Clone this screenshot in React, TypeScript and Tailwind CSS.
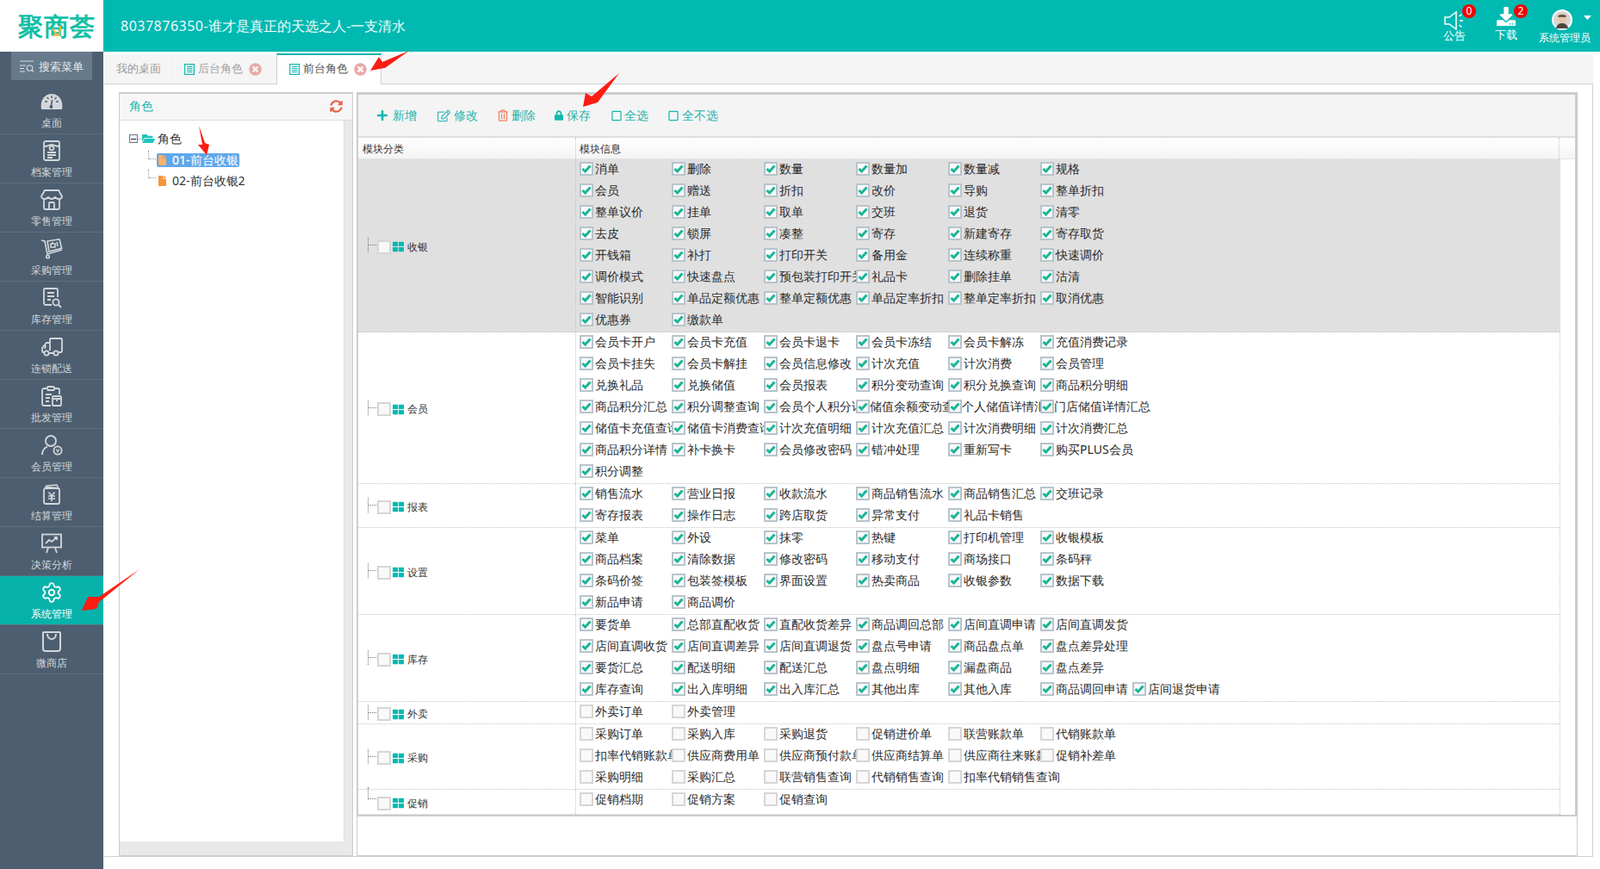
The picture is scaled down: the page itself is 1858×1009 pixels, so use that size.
import React from "react";
import { Settings } from "lucide-react";
import { FaPlus, FaRegEdit, FaRegTrashAlt, FaLock, FaSyncAlt, FaFolderOpen, FaFile, FaTimesCircle, FaThLarge, FaDownload, FaRegSquare } from "react-icons/fa";

type Group = { name: string; lines: string[][]; checked: boolean; shaded?: boolean; last?: boolean };

const groups: Group[] = [
  { name: "收银", checked: true, shaded: true, lines: [
    ["消单","删除","数量","数量加","数量减","规格"],
    ["会员","赠送","折扣","改价","导购","整单折扣"],
    ["整单议价","挂单","取单","交班","退货","清零"],
    ["去皮","锁屏","凑整","寄存","新建寄存","寄存取货"],
    ["开钱箱","补打","打印开关","备用金","连续称重","快速调价"],
    ["调价模式","快速盘点","预包装打印开关","礼品卡","删除挂单","沽清"],
    ["智能识别","单品定额优惠","整单定额优惠","单品定率折扣","整单定率折扣","取消优惠"],
    ["优惠券","缴款单"],
  ]},
  { name: "会员", checked: true, lines: [
    ["会员卡开户","会员卡充值","会员卡退卡","会员卡冻结","会员卡解冻","充值消费记录"],
    ["会员卡挂失","会员卡解挂","会员信息修改","计次充值","计次消费","会员管理"],
    ["兑换礼品","兑换储值","会员报表","积分变动查询","积分兑换查询","商品积分明细"],
    ["商品积分汇总","积分调整查询","会员个人积分详情","储值余额变动查询","个人储值详情汇总","门店储值详情汇总"],
    ["储值卡充值查询","储值卡消费查询","计次充值明细","计次充值汇总","计次消费明细","计次消费汇总"],
    ["商品积分详情","补卡换卡","会员修改密码","错冲处理","重新写卡","购买PLUS会员"],
    ["积分调整"],
  ]},
  { name: "报表", checked: true, lines: [
    ["销售流水","营业日报","收款流水","商品销售流水","商品销售汇总","交班记录"],
    ["寄存报表","操作日志","跨店取货","异常支付","礼品卡销售"],
  ]},
  { name: "设置", checked: true, lines: [
    ["菜单","外设","抹零","热键","打印机管理","收银模板"],
    ["商品档案","清除数据","修改密码","移动支付","商场接口","条码秤"],
    ["条码价签","包装签模板","界面设置","热卖商品","收银参数","数据下载"],
    ["新品申请","商品调价"],
  ]},
  { name: "库存", checked: true, lines: [
    ["要货单","总部直配收货","直配收货差异","商品调回总部","店间直调申请","店间直调发货"],
    ["店间直调收货","店间直调差异","店间直调退货","盘点号申请","商品盘点单","盘点差异处理"],
    ["要货汇总","配送明细","配送汇总","盘点明细","漏盘商品","盘点差异"],
    ["库存查询","出入库明细","出入库汇总","其他出库","其他入库","商品调回申请","店间退货申请"],
  ]},
  { name: "外卖", checked: false, lines: [["外卖订单","外卖管理"]] },
  { name: "采购", checked: false, lines: [
    ["采购订单","采购入库","采购退货","促销进价单","联营账款单","代销账款单"],
    ["扣率代销账款单","供应商费用单","供应商预付款单","供应商结算单","供应商往来账款","促销补差单"],
    ["采购明细","采购汇总","联营销售查询","代销销售查询","扣率代销销售查询"],
  ]},
  { name: "促销", checked: false, last: true, lines: [["促销档期","促销方案","促销查询"]] },
];

const shifted = ["储值余额变动查询", "个人储值详情汇总", "门店储值详情汇总"];

function Box({ checked }: { checked: boolean }) {
  return (
    <span className={`relative z-10 flex h-4 w-4 flex-none items-center justify-center border-2 bg-[#f9f9f9] ${checked ? "border-[#b7c4cc]" : "border-[#d6d6d6]"}`}>
      {checked && (
        <svg width="12" height="10" viewBox="0 0 12 10"><path d="M1.5 5 L4.6 8 L10.5 1.6" fill="none" stroke="#1ab598" strokeWidth="3" /></svg>
      )}
    </span>
  );
}

function Item({ label, checked, end }: { label: string; checked: boolean; end: boolean }) {
  return (
    <div className="flex items-start pt-[3px]">
      <Box checked={checked} />
      <span className={`${shifted.includes(label) ? "ml-0" : "ml-[2px]"} mt-[-1px] block text-[14px] leading-[17px] whitespace-nowrap text-[#2a2a2a] ${end ? "" : shifted.includes(label) ? "w-[91px] overflow-hidden" : "w-[89px] overflow-hidden"}`}>{label}</span>
    </div>
  );
}

function Row({ g }: { g: Group }) {
  return (
    <div className={`flex border-b border-dotted border-[#c4c4c4] ${g.shaded ? "bg-[#e0e0e0]" : "bg-white"}`}>
      <div className="flex w-[252px] flex-none items-center pl-[11px] pt-[3px]">
        {g.last ? (
          <span className="mb-[17px] mt-[-6px] h-[14px] w-[10px] flex-none border-b border-l border-dotted border-[#777]" />
        ) : (
          <span className="mt-[-4px] flex h-[17px] w-[10px] flex-none items-center border-l border-dotted border-[#777]">
            <span className="block w-full border-t border-dotted border-[#777]" />
          </span>
        )}
        <span className="ml-px"><Box checked={false} /></span>
        <FaThLarge className="ml-[2px] h-[13px] w-[13px] flex-none text-[#00b9b1]" />
        <span className="ml-[4px] text-[12px] leading-[16px] text-[#333]">{g.name}</span>
      </div>
      <div className="flex-1 border-l border-dotted border-[#c4c4c4] pl-[4px]">
        {g.lines.map((line, i) => (
          <div key={i} className="grid h-[25px] grid-cols-[repeat(7,107px)]">
            {line.map((t, j) => (
              <Item key={t} label={t} checked={g.checked} end={j === line.length - 1} />
            ))}
          </div>
        ))}
      </div>
    </div>
  );
}

const ic = "h-[24px] w-[26px] text-[#d3d7db]";
const navs: { label: string; icon: React.ReactNode; active?: boolean }[] = [
  { label: "桌面", icon: (
    <svg viewBox="0 0 26 24" className={ic}><path d="M1 21 C-1 9 6 3 13 3 C20 3 27 9 25 21 Z" fill="currentColor" /><path d="M5 12h3M18 12h3M13 5v3M7.5 7l2 2M18.5 7l-2 2" stroke="#4d5e70" strokeWidth="1.4" /><path d="M13.6 10 L12.4 17" stroke="#4d5e70" strokeWidth="1.6" /><circle cx="12.4" cy="18" r="2" fill="#4d5e70" /></svg>
  )},
  { label: "档案管理", icon: (
    <svg viewBox="0 0 26 24" className={ic} fill="none" stroke="currentColor" strokeWidth="1.8"><rect x="4" y="1" width="18" height="22" rx="2" /><path d="M4 7 C9 7 10 5 13 5 C16 5 17 7 22 7" /><circle cx="13" cy="9" r="2.4" /><path d="M8 14h10M8 17h10M8 20h6" /></svg>
  )},
  { label: "零售管理", icon: (
    <svg viewBox="0 0 26 24" className={ic} fill="none" stroke="currentColor" strokeWidth="1.8"><path d="M5 1h16l4 7c0 2-2 3-4 3s-3-1-4-2c-1 1-2 2-4 2s-3-1-4-2c-1 1-2 2-4 2s-4-1-4-3Z" /><path d="M4 11v10c0 1 1 2 2 2h14c1 0 2-1 2-2V11" /><path d="M10 23v-7c0-1 1-1 1-1h4s1 0 1 1v7" /></svg>
  )},
  { label: "采购管理", icon: (
    <svg viewBox="0 0 26 24" className={ic} fill="none" stroke="currentColor" strokeWidth="1.6"><path d="M1 2 L5 3 L8 18 L25 13" /><circle cx="8.5" cy="21" r="1.8" /><path d="M8 3 L22 0.8 L24.6 11.4 L10 15 Z" /><path d="M12 6h5v4h-5zM14 4v2M19 4l1 5" /></svg>
  )},
  { label: "库存管理", icon: (
    <svg viewBox="0 0 26 24" className={ic} fill="none" stroke="currentColor" strokeWidth="1.8"><path d="M13 20H6c-1 0-2-1-2-2V2c0-.6.4-1 1-1h13c1 0 2 1 2 2v8" /><path d="M8 6h8M8 10h8M8 14h4" /><circle cx="18" cy="17" r="3.6" /><path d="M21 20l3 3" /></svg>
  )},
  { label: "连锁配送", icon: (
    <svg viewBox="0 0 26 24" className={ic} fill="none" stroke="currentColor" strokeWidth="1.8"><path d="M11 16V3c0-.6.4-1 1-1h12c.6 0 1 .4 1 1v13c0 1-.5 2-1.500 2H21" /><path d="M11 7H7L2 13v4c0 .6.4 1 1 1h1" /><circle cx="7" cy="19" r="2.600" /><circle cx="18" cy="19" r="2.600" /><path d="M10 19h5M6 10l-1 4" /></svg>
  )},
  { label: "批发管理", icon: (
    <svg viewBox="0 0 26 24" className={ic} fill="none" stroke="currentColor" strokeWidth="1.8"><path d="M12 23H4c-1 0-2-1-2-2V5c0-1 1-2 2-2h3M17 3h3c1 0 2 1 2 2v5" /><rect x="8" y="1" width="8" height="4" rx="1" /><path d="M6 10h7M6 14h5M6 18h4" /><rect x="14" y="12" width="10" height="11" rx="1" /><path d="M14 15h10M19 15v3" /></svg>
  )},
  { label: "会员管理", icon: (
    <svg viewBox="0 0 26 24" className={ic} fill="none" stroke="currentColor" strokeWidth="1.8"><circle cx="12" cy="7" r="6" /><path d="M2 23c0-5 3-8 6-9.500" /><circle cx="20" cy="18" r="4.600" /><path d="M18.300 16.500l1.700 3.200 1.700-3.200" strokeWidth="1.300" /></svg>
  )},
  { label: "结算管理", icon: (
    <svg viewBox="0 0 26 24" className={ic} fill="none" stroke="currentColor" strokeWidth="1.8"><rect x="4" y="5" width="18" height="18" rx="2" /><path d="M5 5l2-3 12-1 2 4M7 3.500l13 1" strokeWidth="1.400" /><path d="M9.500 9.500l3.500 4 3.500-4M9 14h8M9 17h8M13 14v6" strokeWidth="1.700" /></svg>
  )},
  { label: "决策分析", icon: (
    <svg viewBox="0 0 26 24" className={ic} fill="none" stroke="currentColor" strokeWidth="1.8"><rect x="2" y="1.500" width="22" height="15" /><path d="M6 12l4-4 3 2 6-5M16 5h3v3" /><path d="M9 17l-2 6M17 17l2 6" /></svg>
  )},
  { label: "系统管理", active: true, icon: <Settings className="h-[26px] w-[26px] text-white" strokeWidth={1.7} /> },
  { label: "微商店", icon: (
    <svg viewBox="0 0 26 24" className={ic} fill="none" stroke="currentColor" strokeWidth="2"><path d="M3 2 V20 C3 22 4 23 6 23 H20 C22 23 23 22 23 20 V2 C23 1 22 1 22 1 H4 C4 1 3 1 3 2Z" /><path d="M8 3 C8 11 18 11 18 3" /></svg>
  )},
];

function ListIcon() {
  return (
    <svg width="12" height="13" viewBox="0 0 12 13" className="flex-none" fill="none" stroke="#12b8b0" strokeWidth="1.200"><rect x="0.600" y="0.600" width="10.800" height="11.800" /><path d="M3 3.500h6.500M3 5.500h6.500M3 7.500h6.500M3 9.500h6.500" /></svg>
  );
}

function Close() {
  return <FaTimesCircle className="h-[15px] w-[15px] flex-none text-[#e8aaa6]" />;
}

function ToolBtn({ icon, label, gap, cls }: { icon: React.ReactNode; label: string; gap: string; cls: string }) {
  return (
    <span className={`flex items-center ${cls}`}>
      {icon}
      <span className={`${gap} text-[14px] leading-[18px] text-[#28b3ac]`}>{label}</span>
    </span>
  );
}

function Badge({ n }: { n: string }) {
  return (
    <span className="absolute left-[28px] top-[5px] flex h-4 w-4 items-center justify-center rounded-full bg-[#f40000] text-[12px] leading-none text-white">{n}</span>
  );
}

export default function App() {
  return (
    <div className="relative flex h-screen w-full overflow-hidden bg-white font-['Noto_Sans','Noto_Sans_CJK_SC',sans-serif]">
      <aside className="flex w-[120px] flex-none flex-col bg-[#4d5e70]">
        <div className="relative flex h-[60px] flex-none items-center bg-white pl-[21px]">
          <span className="text-[29px] leading-[34px] font-bold tracking-[1px] text-[#12bfa6]">聚商荟</span>
          <svg width="14" height="14" viewBox="0 0 14 14" className="absolute left-[59px] top-[29px]"><path d="M2 4 L7 12 M11 1 L10 12 M3 12 H11" stroke="#f5b83d" strokeWidth="2" fill="none" /></svg>
        </div>
        <div className="mx-[13px] flex h-[33px] flex-none items-center bg-[#677a8c] pl-[10px]">
          <svg width="17" height="14" viewBox="0 0 17 14" fill="none" stroke="#d8dde2" strokeWidth="1.100"><path d="M0 1h16M0 6h7M0 9.500h5M0 13h6" /><circle cx="11.500" cy="9" r="3.300" /><path d="M14 11.500l2 2" /></svg>
          <span className="ml-[5px] text-[13px] leading-[18px] text-[#e6e9ec]">搜索菜单</span>
        </div>
        <nav className="mt-[6px] flex flex-col">
          {navs.map((n) => (
            <div key={n.label} className={`flex h-[57px] flex-col items-center border-b border-[#5e6e7f] pt-[7px] ${n.active ? "bg-[#07b2ab]" : ""}`}>
              <div className="flex h-[24px] items-center justify-center">{n.icon}</div>
              <span className={`mt-[5px] text-[12px] leading-[16px] ${n.active ? "font-medium text-white" : "text-[#d3d7db]"}`}>{n.label}</span>
            </div>
          ))}
        </nav>
      </aside>

      <div className="flex min-w-0 flex-1 flex-col">
        <header className="flex h-[60px] flex-none items-center justify-between bg-[#00b9b1] text-white">
          <span className="pl-[20px] text-[16px] leading-[22px] text-[#f0fbfa]"><span className="tracking-[0.5px]">8037876350-</span>谁才是真正的天选之人-一支清水</span>
          <div className="flex h-full items-start">
            <div className="relative flex w-[38px] flex-col items-center pt-[13px]">
              <svg width="24" height="22" viewBox="0 0 24 22" fill="none" stroke="white" strokeWidth="1.500"><path d="M1 7h5l8-6v20l-8-6H1Z" /><path d="M17.500 6l3-2.500M18 11h4M17.500 16l3 2.500" /></svg>
              <Badge n="0" />
              <span className="mt-[-2px] text-[13px] leading-[17px]">公告</span>
            </div>
            <div className="relative ml-[22px] flex w-[38px] flex-col items-center pt-[8px]">
              <FaDownload className="h-[22px] w-[22px]" />
              <Badge n="2" />
              <span className="mt-[2px] text-[13px] leading-[17px]">下载</span>
            </div>
            <div className="relative ml-[18px] mr-[10px] flex w-[62px] flex-col items-center pt-[11px]">
              <svg width="24" height="24" viewBox="0 0 24 24" className="ml-[-7px]">
                <circle cx="12" cy="12" r="11" fill="#d9d4cf" stroke="white" strokeWidth="2" />
                <path d="M5 22c1-5 4-6 7-6s6 1 7 6Z" fill="#4a4540" />
                <circle cx="12" cy="11" r="4.500" fill="#e8c4a6" />
                <path d="M7 8c1-3 9-3 10 0l-1 1H8Z" fill="#6b5545" />
              </svg>
              <svg width="9" height="5" viewBox="0 0 9 5" className="absolute right-0 top-[18px]"><path d="M0 0h9L4.500 5Z" fill="white" /></svg>
              <span className="text-[12px] leading-[17px] whitespace-nowrap">系统管理员</span>
            </div>
          </div>
        </header>

        <div className="ml-px mr-[8px] mt-[3px] flex h-[35px] flex-none border-b border-[#cdd2d6] bg-[#f5f5f5]">
          <div className="flex h-[34px] w-[79px] items-center border-r border-[#eeeeee] pl-[14px] text-[13px] text-[#999]">我的桌面</div>
          <div className="flex h-[34px] w-[121px] items-center pl-[14px] text-[13px] text-[#a3a3a3]">
            <ListIcon /><span className="ml-[4px]">后台角色</span><span className="ml-[7px]"><Close /></span>
          </div>
          <div className="mt-[-1px] flex h-[36px] w-[122px] items-center border-x border-t-2 border-x-[#ccd0d4] border-t-[#00b3ac] bg-white pb-[2px] pl-[14px] text-[13px] font-medium text-[#555]">
            <ListIcon /><span className="ml-[4px]">前台角色</span><span className="ml-[7px]"><Close /></span>
          </div>
        </div>

        <div className="mb-[14px] ml-px mr-[8px] flex min-h-0 flex-1 gap-[4px] border-b border-r border-[#cdd2d6] pl-[17px] pr-[17px] pt-[9px]">
          <section className="flex w-[272px] flex-none flex-col border border-t-2 border-[#cccccc]">
            <div className="flex h-[31px] flex-none items-center justify-between border-b border-[#dddddd] bg-[#f6f6f6] pb-[2px] pl-[11px] pr-[11px]">
              <span className="text-[14px] leading-[18px] text-[#1cb7b0]">角色</span>
              <FaSyncAlt className="h-[15px] w-[15px] text-[#e7674c]" />
            </div>
            <div className="flex min-h-0 flex-1">
              <div className="flex-1 pl-[11px] pt-[11px] text-[14px] leading-[18px] text-[#333]">
                <div className="flex h-[20px] items-center">
                  <span className="flex h-[10px] w-[10px] items-center justify-center border border-[#777] bg-[#eef]"><span className="h-px w-[6px] bg-[#333]" /></span>
                  <span className="w-[5px] border-t border-dotted border-[#999]" />
                  <FaFolderOpen className="h-[14px] w-[15px] text-[#1fc5bd]" />
                  <span className="ml-[3px]">角色</span>
                </div>
                <div className="ml-[22px] mt-[4px] flex h-[22px] items-center">
                  <span className="flex h-[10px] w-[9px] items-end self-start border-l border-dotted border-[#999]"><span className="w-full border-t border-dotted border-[#999]" /></span>
                  <span className="ml-px flex h-[16px] w-[96px] items-center rounded-[2px] bg-[#5fa7ea] pl-[2px] font-medium text-white">
                    <FaFile className="h-[12px] w-[9px] text-[#ffb066]" /><span className="ml-[7px]">01-前台收银</span>
                  </span>
                </div>
                <div className="ml-[22px] flex h-[26px] items-center">
                  <span className="flex h-[10px] w-[9px] items-end self-start border-l border-dotted border-[#999]"><span className="w-full border-t border-dotted border-[#999]" /></span>
                  <span className="ml-[3px] flex items-center">
                    <FaFile className="h-[12px] w-[9px] text-[#fa9238]" /><span className="ml-[7px]">02-前台收银2</span>
                  </span>
                </div>
              </div>
              <div className="w-[10px] flex-none border-l border-[#dddddd] bg-[#e9e9e9]" />
            </div>
            <div className="h-[16px] flex-none bg-[#e9e9e9]" />
          </section>

          <section className="min-w-0 flex-1 border border-[#cccccc]">
            <div className="border-2 border-l border-[#cccccc]">
              <div className="flex h-[50px] items-center border-b-2 border-[#dedede] bg-[#f4f4f4]">
                <ToolBtn cls="ml-[21px]" gap="ml-[5px]" label="新增" icon={<FaPlus className="h-[14px] w-[14px] text-[#12b8b0]" />} />
                <ToolBtn cls="ml-[24px]" gap="ml-[4px]" label="修改" icon={<FaRegEdit className="h-[15px] w-[15px] text-[#3fb9c0]" />} />
                <ToolBtn cls="ml-[23px]" gap="ml-[4px]" label="删除" icon={<FaRegTrashAlt className="h-[14px] w-[12px] text-[#f0835f]" />} />
                <ToolBtn cls="ml-[22px]" gap="ml-[4px]" label="保存" icon={<FaLock className="h-[12px] w-[10px] text-[#12b8b0]" />} />
                <ToolBtn cls="ml-[24px]" gap="ml-[3px]" label="全选" icon={<FaRegSquare className="h-[13px] w-[12px] text-[#12b8b0]" />} />
                <ToolBtn cls="ml-[23px]" gap="ml-[4px]" label="全不选" icon={<FaRegSquare className="h-[13px] w-[12px] text-[#12b8b0]" />} />
              </div>
              <div className="flex h-[25px] items-center border-b border-[#e4e4e4] bg-gradient-to-b from-white to-[#f4f4f4] text-[12px] text-[#333]">
                <div className="flex h-full w-[252px] flex-none items-center pl-[5px] pt-[2px]">模块分类</div>
                <div className="flex h-full w-[1142px] flex-none items-center border-l border-dotted border-[#c4c4c4] pl-[4px] pt-[2px]">模块信息</div>
                <div className="h-full flex-1 border-l border-dotted border-[#c4c4c4]" />
              </div>
              <div className="flex">
                <div className="w-[1395px] flex-none">
                  {groups.map((g) => <Row key={g.name} g={g} />)}
                </div>
                <div className="flex-1 border-l border-dotted border-[#c4c4c4]" />
              </div>
            </div>
          </section>
        </div>
      </div>

      <svg className="pointer-events-none absolute left-0 top-0 z-50" width="1858" height="1009" viewBox="0 0 1858 1009">
        <g fill="#fb1d12">
          <polygon points="430,82 440,66 444,72 475,59 447,79 446,79" />
          <polygon points="677,124 680,108 687,112 719,85 694,119" />
          <polygon points="231,146 238,166 243,168 240,180 230,168 235,168" />
          <polygon points="162,661 115,693 102,693 95,709 112,707 115,699" />
        </g>
      </svg>
    </div>
  );
}
